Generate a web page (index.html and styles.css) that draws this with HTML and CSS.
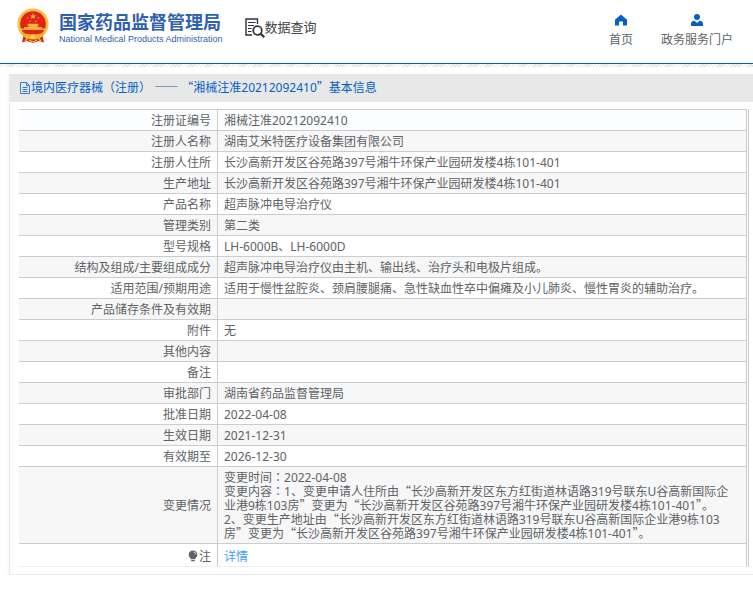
FILE: index.html
```html
<!DOCTYPE html>
<html lang="zh-CN">
<head>
<meta charset="utf-8">
<meta name="viewport" content="width=device-width, initial-scale=1">
<title>国家药品监督管理局 数据查询</title>
<link rel="stylesheet" href="styles.css">
</head>
<body>
<header class="site-header">
  <div class="brand">
    <svg class="emblem" viewBox="0 0 32 35" aria-hidden="true">
      <path d="M7 25 L25 25 L27 34 L22 32.5 L16 34.5 L10 32.5 L5 34 Z" fill="#d8251d"/>
      <circle cx="16" cy="15.5" r="15.5" fill="#f0b52c"/>
      <circle cx="16" cy="15.5" r="14.3" fill="none" stroke="#f8d154" stroke-width="1"/>
      <circle cx="16" cy="15.5" r="12.8" fill="#e3231b"/>
      <path d="M16 4.6 L16.8 6.9 H19.2 L17.3 8.3 L18 10.6 L16 9.2 L14 10.6 L14.7 8.3 L12.8 6.9 H15.2 Z" fill="#f8d13c"/>
      <g fill="#f0a030"><circle cx="10.5" cy="9.5" r="0.8"/><circle cx="21.5" cy="9.5" r="0.8"/><circle cx="13" cy="12.7" r="0.8"/><circle cx="19" cy="12.7" r="0.8"/></g>
      <path d="M11 15.2 H21 L22 17 H20.5 V18.4 H25 V20 H28 V21.5 H4 V20 H7 V18.4 H11.5 V17 H10 Z" fill="#f6b43a"/>
      <path d="M4 24 Q10 26 16 26 T28 24 L26 27 Q22 28 20 30.5 L16 29 L12 30.5 Q10 28 6 27 Z" fill="#efb02a"/>
      <circle cx="16" cy="28" r="2.3" fill="#f8d154"/>
      <path d="M6 27 L10.5 29.5 L8 33 M26 27 L21.5 29.5 L24 33 M12 31.5 L16 33.5 L20 31.5" fill="none" stroke="#f3bd35" stroke-width="1.3"/>
    </svg>
    <div class="brand-text">
      <span class="brand-cn">国家药品监督管理局</span>
      <span class="brand-en">National Medical Products Administration</span>
    </div>
  </div>
  <div class="section-name">
    <svg class="search-doc" viewBox="0 0 20 20" fill="none" stroke="#2f3040" aria-hidden="true">
      <path d="M12.5 6 V1 H1 V17 H7" stroke-width="1.4"/>
      <path d="M3 4.5 H10.5 M3 7.5 H9 M3 10.5 H6.5 M3 13.5 H6.5" stroke-width="1.2"/>
      <circle cx="12.5" cy="12.5" r="4.3" stroke-width="1.7"/>
      <path d="M15.6 15.6 L19.3 19.3" stroke-width="2.2"/>
    </svg>
    <span>数据查询</span>
  </div>
  <nav class="site-nav">
    <a href="#">
      <svg viewBox="0 0 12 12" aria-hidden="true"><path d="M6 0.5 L12 5.8 V11.5 H8 V7.5 H4 V11.5 H0 V5.8 Z" fill="#0560c4"/></svg>
      <span>首页</span>
    </a>
    <a href="#">
      <svg viewBox="0 0 12 12" aria-hidden="true"><circle cx="6" cy="3" r="3" fill="#0560c4"/><path d="M0 12 V9.5 Q0 7.2 3.5 6.8 L6 9 L8.5 6.8 Q12 7.2 12 9.5 V12 Z" fill="#0560c4"/></svg>
      <span>政务服务门户</span>
    </a>
  </nav>
</header>
<div class="stripe"></div>

<main class="panel">
  <h1 class="panel-title">
    <svg viewBox="0 0 10 12" fill="none" stroke="#0560c4" stroke-width="0.8" aria-hidden="true"><path d="M0.5 0.5 H6.5 L9.5 3.5 V11.5 H0.5 Z M6.5 0.5 V3.5 H9.5 M2.5 5.5 H7.5 M2.5 7.5 H7.5 M2.5 9.5 H7.5"/></svg>
    <span>境内医疗器械（注册） <span class="wide">——</span> <span class="wide">“</span>湘械注准20212092410<span class="wide">”</span>基本信息</span>
  </h1>
  <div class="panel-body">
    <div class="table-frame">
      <table class="info">
        <tbody>
          <tr class="current"><th scope="row">注册证编号</th><td>湘械注准20212092410</td></tr>
          <tr><th scope="row">注册人名称</th><td>湖南艾米特医疗设备集团有限公司</td></tr>
          <tr><th scope="row">注册人住所</th><td>长沙高新开发区谷苑路397号湘牛环保产业园研发楼4栋101-401</td></tr>
          <tr><th scope="row">生产地址</th><td>长沙高新开发区谷苑路397号湘牛环保产业园研发楼4栋101-401</td></tr>
          <tr><th scope="row">产品名称</th><td>超声脉冲电导治疗仪</td></tr>
          <tr><th scope="row">管理类别</th><td>第二类</td></tr>
          <tr><th scope="row">型号规格</th><td>LH-6000B、LH-6000D</td></tr>
          <tr><th scope="row">结构及组成/主要组成成分</th><td>超声脉冲电导治疗仪由主机、输出线、治疗头和电极片组成。</td></tr>
          <tr><th scope="row">适用范围/预期用途</th><td>适用于慢性盆腔炎、颈肩腰腿痛、急性缺血性卒中偏瘫及小儿肺炎、慢性胃炎的辅助治疗。</td></tr>
          <tr><th scope="row">产品储存条件及有效期</th><td></td></tr>
          <tr><th scope="row">附件</th><td>无</td></tr>
          <tr><th scope="row">其他内容</th><td></td></tr>
          <tr><th scope="row">备注</th><td></td></tr>
          <tr><th scope="row">审批部门</th><td>湖南省药品监督管理局</td></tr>
          <tr><th scope="row">批准日期</th><td>2022-04-08</td></tr>
          <tr><th scope="row">生效日期</th><td>2021-12-31</td></tr>
          <tr><th scope="row">有效期至</th><td>2026-12-30</td></tr>
          <tr><th scope="row">变更情况</th><td>变更时间<span class="colon" lang="zh-TW">：</span>2022-04-08<br>变更内容<span class="colon" lang="zh-TW">：</span>1、变更申请人住所由<span class="wide">“</span>长沙高新开发区东方红街道林语路319号联东U谷高新国际企业港9栋103房<span class="wide">”</span>变更为<span class="wide">“</span>长沙高新开发区谷苑路397号湘牛环保产业园研发楼4栋101-401<span class="wide">”</span>。<br>2、变更生产地址由<span class="wide">“</span>长沙高新开发区东方红街道林语路319号联东U谷高新国际企业港9栋103房<span class="wide">”</span>变更为<span class="wide">“</span>长沙高新开发区谷苑路397号湘牛环保产业园研发楼4栋101-401<span class="wide">”</span>。</td></tr>
          <tr class="note"><th scope="row"><svg class="bulb" viewBox="0 0 10 12" aria-hidden="true"><path d="M5 0.5 A4.3 4.3 0 0 1 7.3 8.4 V9.3 H2.7 V8.4 A4.3 4.3 0 0 1 5 0.5 Z M3.2 10 H6.8 V11.3 H3.2 Z" fill="#606266"/><path d="M5.5 2 Q7.6 2.4 8 4.5" fill="none" stroke="#fff" stroke-width="0.7"/></svg>注</th><td><a href="#">详情</a></td></tr>
        </tbody>
      </table>
    </div>
  </div>
</main>
</body>
</html>
```
FILE: styles.css
```css
* {
  box-sizing: border-box;
}

body {
  margin: 0;
  background: #fff;
  color: #606266;
  font-family: "Noto Sans", "Noto Sans CJK SC", sans-serif;
  font-size: 12px;
  line-height: 14px;
}

a {
  color: inherit;
  text-decoration: none;
}

svg {
  display: block;
  flex: none;
}

/* Header */
.site-header {
  display: flex;
  align-items: flex-start;
  height: 64px;
  padding: 8px 20px 0 17px;
  border-bottom: 1px solid #0560c4;
}

.brand {
  display: flex;
  gap: 10px;
}

.emblem {
  width: 32px;
  height: 36px;
}

.brand-text {
  display: flex;
  flex-direction: column;
  padding-top: 4px;
  color: #2f5fb0;
  white-space: nowrap;
}

.brand-cn {
  font-size: 18px;
  font-weight: 700;
  line-height: 20px;
}

.brand-en {
  font-family: "Liberation Sans", Arial, sans-serif;
  font-size: 9px;
  line-height: 14px;
}

.section-name {
  display: flex;
  margin-left: 22px;
  padding-top: 10px;
  color: #444;
  font-size: 13px;
  line-height: 18px;
  white-space: nowrap;
}

.search-doc {
  width: 20px;
  height: 20px;
}

.site-nav {
  display: flex;
  gap: 28px;
  margin-left: auto;
  padding-top: 6px;
  white-space: nowrap;
}

.site-nav a {
  display: flex;
  flex-direction: column;
  align-items: center;
  gap: 7px;
}

.site-nav svg {
  width: 12px;
  height: 12px;
}

.stripe {
  height: 3px;
  background: repeating-linear-gradient(135deg, #fff 0 1px, #e2e2e2 1px 2px);
}

/* Record panel */
.panel {
  margin: 7px 0 0 9px;
  border-left: 1px solid #ebebeb;
  border-bottom: 1px solid #ebebeb;
  box-shadow: 0 1px 4px #f0f0f0;
}

.panel-title {
  display: flex;
  align-items: center;
  gap: 1px;
  height: 28px;
  margin: 0;
  padding-left: 10px;
  background: #e8e8e8;
  color: #0560c4;
  font-size: 12px;
  font-weight: 400;
}

.panel-title svg {
  width: 10px;
  height: 12px;
}

.panel-body {
  padding: 7px 4px 7px 9px;
}

.table-frame {
  padding-right: 1px;
  border-right: 1px solid #ccc;
}

.info {
  width: 100%;
  border-collapse: separate;
  border-spacing: 0;
  border-right: 1px solid #ccc;
  border-bottom: 1px solid #ebeef5;
  table-layout: fixed;
}

.info th,
.info td {
  height: 21px;
  padding: 4px 6px 2px;
  border-top: 1px solid #ccc;
  font-weight: 400;
}

.info th {
  width: 199px;
  border-right: 1px solid #ccc;
  text-align: right;
}

.info tr:nth-child(even) {
  background: #f7f7f7;
}

.info .current {
  background: #fbfdff;
}

.info .note {
  background: #fff;
}

.note th,
.note td {
  padding-top: 6px;
}

.note a {
  color: #409eff;
}

.bulb {
  display: inline-block;
  width: 10px;
  height: 12px;
  margin-right: 1px;
  vertical-align: -1px;
}

/* Full-width punctuation keeps the line height of the text around it */
.wide,
.colon {
  line-height: 1px;
}

.wide {
  font-family: "Noto Sans CJK SC", sans-serif;
}

.colon {
  font-family: "Noto Sans CJK TC", sans-serif;
}
```
